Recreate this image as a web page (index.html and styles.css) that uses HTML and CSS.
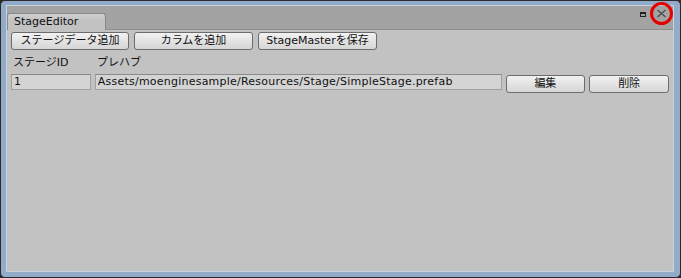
FILE: index.html
```html
<!DOCTYPE html>
<html>
<head>
<meta charset="utf-8">
<link rel="stylesheet" href="styles.css">
</head>
<body>
<div class="window">
  <div class="inner">
    <div class="tabbar">
      <div class="tab">StageEditor</div>
      <div class="tabtools">
        <span class="maxicon"></span>
        <span class="closewrap">
          <svg width="26" height="26" viewBox="0 0 26 26">
            <path d="M9.5 9 L17.5 16 M17.5 9 L9.5 16" stroke="#4a4a4a" stroke-width="1.2" fill="none"/>
            <circle cx="13.5" cy="12.5" r="10" stroke="#e50000" stroke-width="3" fill="none"/>
          </svg>
        </span>
      </div>
    </div>
    <div class="content">
      <div class="toolbar">
        <button class="btn w118">ステージデータ追加</button>
        <button class="btn w119">カラムを追加</button>
        <button class="btn w119">StageMasterを保存</button>
      </div>
      <div class="labels">
        <span class="lab-id">ステージID</span>
        <span>プレハブ</span>
      </div>
      <div class="row">
        <div class="field fid">1</div>
        <div class="field fpath">Assets/moenginesample/Resources/Stage/SimpleStage.prefab</div>
        <button class="btn w79">編集</button>
        <button class="btn w79">削除</button>
      </div>
    </div>
  </div>
</div>
</body>
</html>
```

FILE: styles.css
```css
html, body {
  margin: 0;
  padding: 0;
  background: #2a2a2a;
}
body {
  width: 681px;
  height: 278px;
  overflow: hidden;
  font-family: "DejaVu Sans", "Noto Sans CJK JP", sans-serif;
  font-size: 11px;
  color: #111;
}
.window {
  box-sizing: border-box;
  width: 681px;
  height: 278px;
  border: 1px solid #2b2b2b;
  border-radius: 5px;
  background: #92abc8;
  padding: 4px 6px 5px 5px;
}
.inner {
  box-sizing: border-box;
  height: 100%;
  border: 1px solid #c9d3de;
  background: #c2c2c2;
  display: flex;
  flex-direction: column;
}
.tabbar {
  height: 23px;
  background: #a3a3a3;
  display: flex;
  align-items: flex-end;
  position: relative;
  border-bottom: 1px solid #8e8e8e;
}
.tab {
  box-sizing: border-box;
  width: 99px;
  height: 17px;
  margin-bottom: -1px;
  background: linear-gradient(#d0d0d0, #c2c2c2 40%);
  border: 1px solid #888;
  border-bottom: none;
  border-radius: 3px 3px 0 0;
  padding: 1px 0 0 6px;
  line-height: 14px;
  color: #101010;
}
.tabtools {
  position: absolute;
  right: -1px;
  top: -5px;
  display: flex;
  align-items: center;
}
.maxicon {
  box-sizing: border-box;
  width: 6px;
  height: 5px;
  border: 1px solid #222;
  border-top-width: 2px;
  margin-right: 2px;
}
.closewrap svg {
  display: block;
}
.content {
  flex: 1;
  padding: 2px 0 0 4px;
}
.toolbar {
  display: flex;
  gap: 6px;
}
.btn {
  box-sizing: border-box;
  height: 18px;
  padding: 0;
  font-family: "DejaVu Sans", "Noto Sans CJK JP", sans-serif;
  font-size: 11px;
  color: #111;
  background: linear-gradient(#f2f2f2, #e3e3e3 50%, #d6d6d6);
  border: 1px solid #6c6c6c;
  border-radius: 3px;
  line-height: 16px;
}
.w118 { width: 118px; }
.w119 { width: 119px; margin-left: -1px; }
.w79 { width: 80px; }
.labels {
  display: flex;
  margin: 6px 0 0 2px;
  height: 14px;
  line-height: 14px;
}
.lab-id {
  width: 84px;
}
.row {
  display: flex;
  align-items: flex-start;
  margin-top: 4px;
}
.field {
  box-sizing: border-box;
  height: 16px;
  background: #d4d4d4;
  border: 1px solid #a0a0a0;
  border-top-color: #8a8a8a;
  line-height: 14px;
  padding-left: 2px;
  white-space: nowrap;
  overflow: hidden;
}
.fid {
  width: 80px;
  margin-right: 4px;
}
.fpath {
  width: 408px;
  margin-right: 4px;
  letter-spacing: 0.23px;
}
.row .btn {
  margin-top: 1px;
  margin-right: 4px;
}
```
